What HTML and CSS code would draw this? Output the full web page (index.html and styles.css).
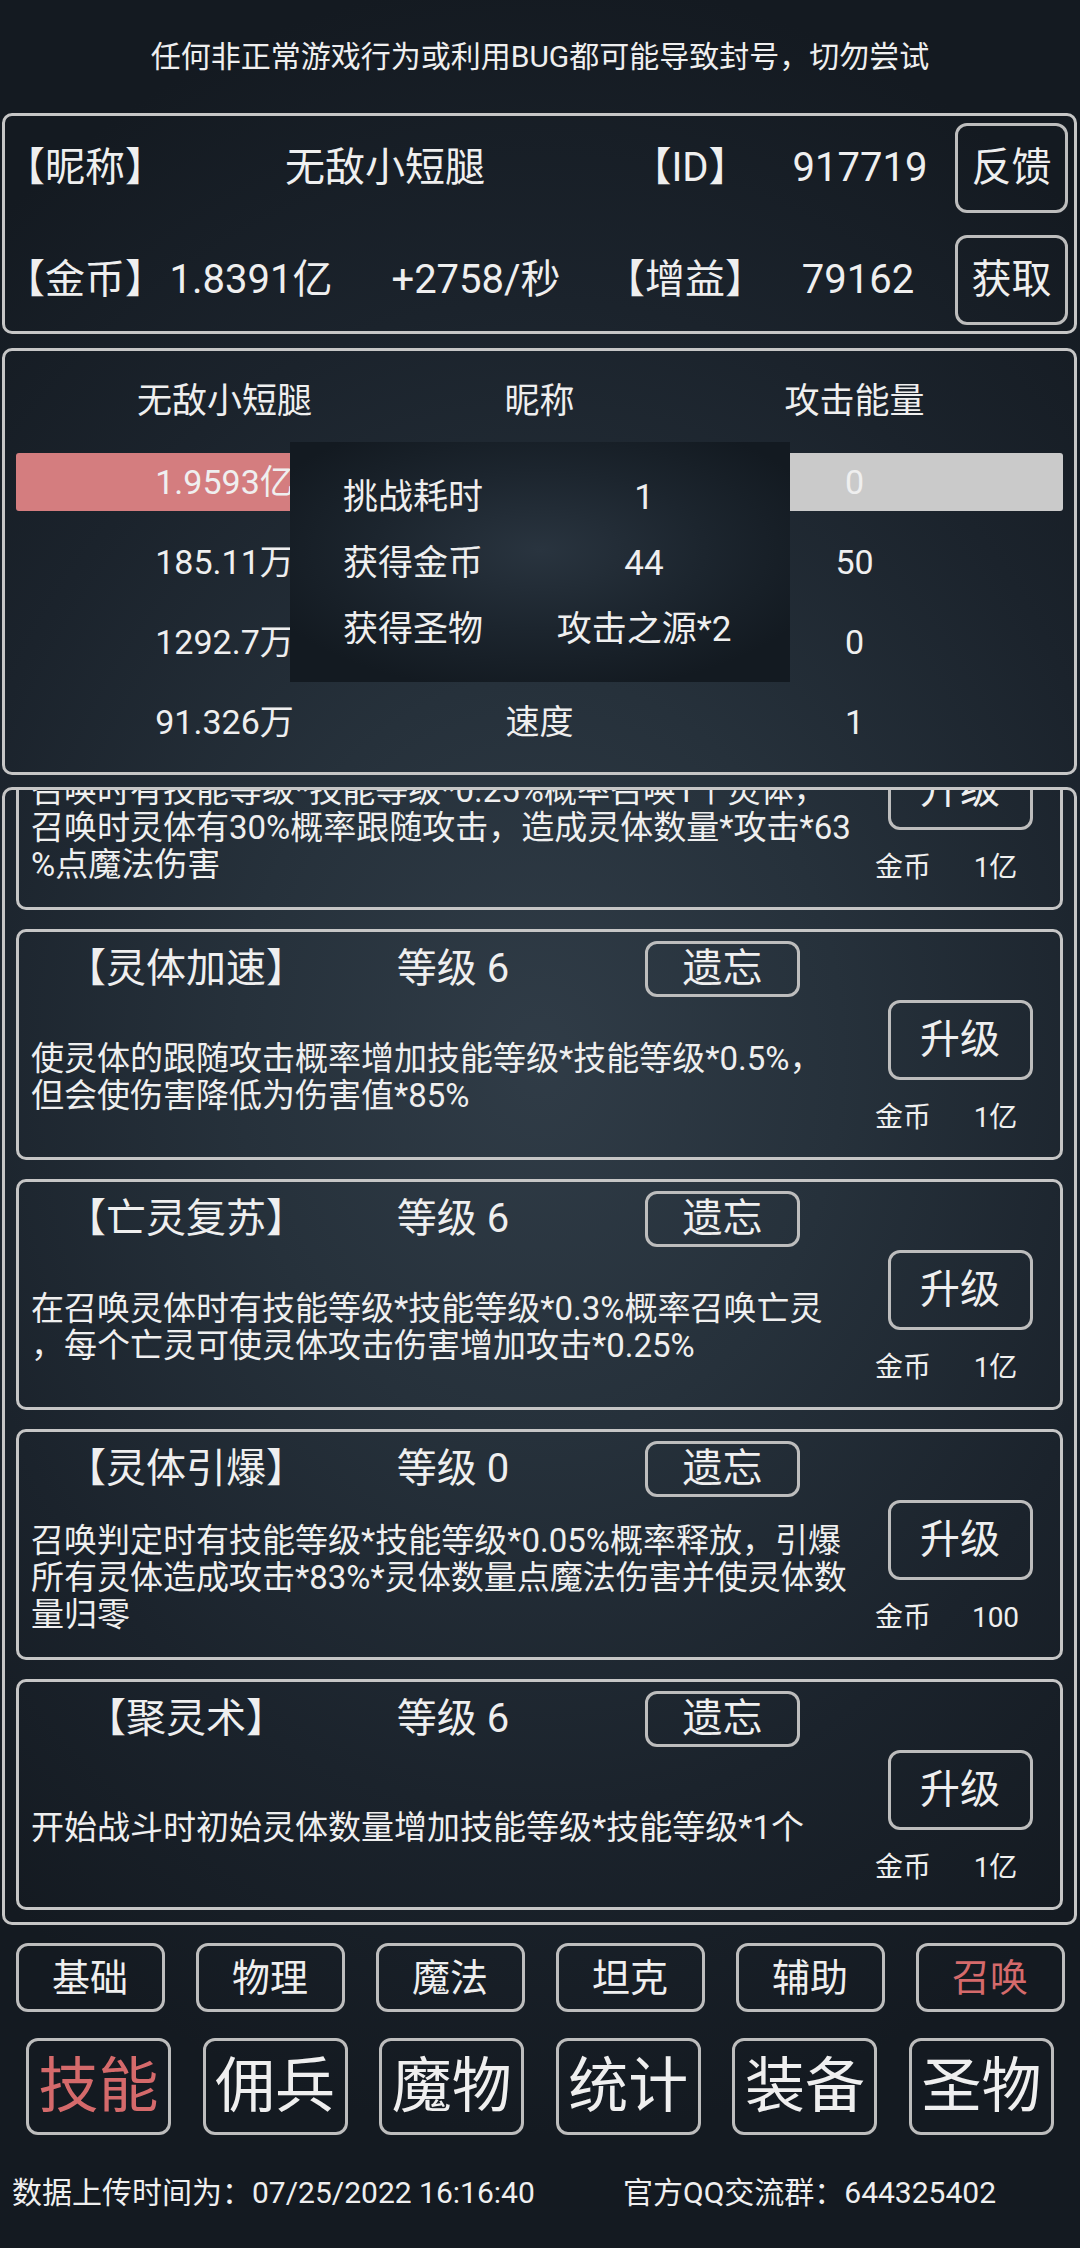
FILE: index.html
```html
<!DOCTYPE html>
<html lang="zh-CN">
<head>
    <meta charset="UTF-8">
    <meta name="viewport" content="width=device-width, initial-scale=1.0">
    <title>技能 - 召唤</title>
    <link rel="stylesheet" href="styles.css">
</head>
<body>
    <div class="notice">任何非正常游戏行为或利用BUG都可能导致封号，切勿尝试</div>

    <div class="info-card">
        <div class="info-row row-top">
            <span>【昵称】</span>
            <span>无敌小短腿</span>
            <span>【ID】</span>
            <span>917719</span>
            <button class="btn info-btn">反馈</button>
        </div>
        <div class="info-row row-bottom">
            <span>【金币】</span>
            <span>1.8391亿</span>
            <span>+2758/秒</span>
            <span>【增益】</span>
            <span>79162</span>
            <button class="btn info-btn">获取</button>
        </div>
    </div>

    <div class="rank-panel">
        <div class="rank-row head">
            <span>无敌小短腿</span><span>昵称</span><span>攻击能量</span>
        </div>
        <div class="rank-row hp">
            <span>1.9593亿</span><span>生命</span><span>0</span>
        </div>
        <div class="rank-row">
            <span>185.11万</span><span>攻击</span><span>50</span>
        </div>
        <div class="rank-row">
            <span>1292.7万</span><span>防御</span><span>0</span>
        </div>
        <div class="rank-row">
            <span>91.326万</span><span>速度</span><span>1</span>
        </div>

        <!-- 挑战结果弹窗 -->
        <div class="result">
            <span>挑战耗时</span><span>1</span>
            <span>获得金币</span><span>44</span>
            <span>获得圣物</span><span>攻击之源*2</span>
        </div>
    </div>

    <div class="skill-panel">
        <div class="skill-list">
            <div class="skill-card">
                <div class="skill-main">
                    <div class="skill-title">
                        <span class="skill-name">【召唤灵体】</span>
                        <span class="skill-level">等级 6</span>
                        <button class="btn forget-btn">遗忘</button>
                    </div>
                    <div class="skill-desc">召唤时有技能等级*技能等级*0.25%概率召唤1个灵体，<br>召唤时灵体有30%概率跟随攻击，造成灵体数量*攻击*63<br>%点魔法伤害</div>
                </div>
                <div class="skill-side">
                    <button class="btn up-btn">升级</button>
                    <div class="cost"><span>金币</span><span class="cost-num">1亿</span></div>
                </div>
            </div>

            <div class="skill-card">
                <div class="skill-main">
                    <div class="skill-title">
                        <span class="skill-name">【灵体加速】</span>
                        <span class="skill-level">等级 6</span>
                        <button class="btn forget-btn">遗忘</button>
                    </div>
                    <div class="skill-desc">使灵体的跟随攻击概率增加技能等级*技能等级*0.5%，<br>但会使伤害降低为伤害值*85%</div>
                </div>
                <div class="skill-side">
                    <button class="btn up-btn">升级</button>
                    <div class="cost"><span>金币</span><span class="cost-num">1亿</span></div>
                </div>
            </div>

            <div class="skill-card">
                <div class="skill-main">
                    <div class="skill-title">
                        <span class="skill-name">【亡灵复苏】</span>
                        <span class="skill-level">等级 6</span>
                        <button class="btn forget-btn">遗忘</button>
                    </div>
                    <div class="skill-desc">在召唤灵体时有技能等级*技能等级*0.3%概率召唤亡灵<br>，每个亡灵可使灵体攻击伤害增加攻击*0.25%</div>
                </div>
                <div class="skill-side">
                    <button class="btn up-btn">升级</button>
                    <div class="cost"><span>金币</span><span class="cost-num">1亿</span></div>
                </div>
            </div>

            <div class="skill-card">
                <div class="skill-main">
                    <div class="skill-title">
                        <span class="skill-name">【灵体引爆】</span>
                        <span class="skill-level">等级 0</span>
                        <button class="btn forget-btn">遗忘</button>
                    </div>
                    <div class="skill-desc">召唤判定时有技能等级*技能等级*0.05%概率释放，引爆<br>所有灵体造成攻击*83%*灵体数量点魔法伤害并使灵体数<br>量归零</div>
                </div>
                <div class="skill-side">
                    <button class="btn up-btn">升级</button>
                    <div class="cost"><span>金币</span><span class="cost-num">100</span></div>
                </div>
            </div>

            <div class="skill-card">
                <div class="skill-main">
                    <div class="skill-title">
                        <span class="skill-name">【聚灵术】</span>
                        <span class="skill-level">等级 6</span>
                        <button class="btn forget-btn">遗忘</button>
                    </div>
                    <div class="skill-desc">开始战斗时初始灵体数量增加技能等级*技能等级*1个</div>
                </div>
                <div class="skill-side">
                    <button class="btn up-btn">升级</button>
                    <div class="cost"><span>金币</span><span class="cost-num">1亿</span></div>
                </div>
            </div>
        </div>
    </div>

    <div class="category-bar">
        <button class="btn cat-btn">基础</button>
        <button class="btn cat-btn">物理</button>
        <button class="btn cat-btn">魔法</button>
        <button class="btn cat-btn">坦克</button>
        <button class="btn cat-btn">辅助</button>
        <button class="btn cat-btn active">召唤</button>
    </div>

    <div class="tab-bar">
        <button class="btn tab-btn active">技能</button>
        <button class="btn tab-btn">佣兵</button>
        <button class="btn tab-btn">魔物</button>
        <button class="btn tab-btn">统计</button>
        <button class="btn tab-btn">装备</button>
        <button class="btn tab-btn">圣物</button>
    </div>

    <div class="footer">
        <span>数据上传时间为：07/25/2022 16:16:40</span>
        <span>官方QQ交流群：644325402</span>
    </div>
</body>
</html>
```

FILE: styles.css
```css
* {
    box-sizing: border-box;
}

html {
    background-color: #151c23;
}

body {
    margin: 0;
    width: 1080px;
    height: 2248px;
    overflow: hidden;
    font-family: Roboto, "Noto Sans CJK SC", sans-serif;
    color: #efefef;
    line-height: 1.2;
    background: radial-gradient(ellipse 80% 48% at 50% 47%, #303c47 0%, #26313b 35%, #1b232c 70%, #141a21 100%);
}

.btn {
    background: transparent;
    border: 3px solid #bdbdbd;
    border-radius: 12px;
    color: #efefef;
    font-family: inherit;
    padding: 0;
    display: flex;
    align-items: center;
    justify-content: center;
    line-height: 1;
}

.notice {
    height: 113px;
    display: flex;
    align-items: center;
    justify-content: center;
    font-size: 30px;
}

/* 玩家信息 */
.info-card {
    margin: 0 3px 0 2px;
    height: 221px;
    border: 3px solid #c6c6c6;
    border-radius: 10px;
    padding-top: 7px;
}

.info-row {
    display: grid;
    height: 90px;
    align-items: center;
    justify-items: center;
    font-size: 40px;
}

.row-top {
    grid-template-columns: 150px 460px 150px 190px 113px;
}

.row-bottom {
    grid-template-columns: 150px 192px 258px 156px 194px 113px;
    margin-top: 22px;
}

.info-btn {
    width: 113px;
    height: 90px;
    font-size: 40px;
}

/* 排行 */
.rank-panel {
    position: relative;
    margin: 14px 3px 0 2px;
    height: 427px;
    border: 3px solid #c6c6c6;
    border-radius: 10px;
    padding: 11px 11px 0;
}

.rank-row {
    display: grid;
    grid-template-columns: repeat(3, 315px);
    justify-content: center;
    justify-items: center;
    align-items: center;
    height: 80px;
    font-size: 34px;
}

.rank-row.head {
    font-size: 35px;
}

.rank-row.hp {
    height: 58px;
    margin: 11px 0;
    border-radius: 3px;
    background: linear-gradient(to right, #d47d7f 0, #d47d7f 50%, #cacaca 50%, #cacaca 100%);
}

.result {
    position: absolute;
    left: 285px;
    top: 91px;
    width: 500px;
    height: 240px;
    padding-top: 23px;
    display: grid;
    grid-template-columns: 246px 216px;
    grid-auto-rows: 66px;
    justify-items: center;
    align-items: center;
    font-size: 35px;
    background: radial-gradient(ellipse 60% 60% at 50% 45%, #29343f 0%, #1c252e 55%, #131a21 100%);
}

/* 技能列表 */
.skill-panel {
    margin: 12px 3px 0 2px;
    height: 1138px;
    border: 3px solid #c6c6c6;
    border-radius: 10px;
    padding: 0 11px;
    overflow: hidden;
}

.skill-list {
    margin-top: -111px;
    display: flex;
    flex-direction: column;
    gap: 19px;
}

.skill-card {
    height: 231px;
    border: 3px solid #c6c6c6;
    border-radius: 10px;
    display: grid;
    grid-template-columns: 841px 1fr;
}

.skill-main {
    display: flex;
    flex-direction: column;
}

.skill-title {
    display: flex;
    align-items: center;
    margin-top: 9px;
    height: 56px;
    font-size: 40px;
}

.skill-name {
    width: 334px;
    text-align: center;
}

.skill-level {
    width: 200px;
    text-align: center;
}

.forget-btn {
    margin-left: 92px;
    width: 155px;
    height: 56px;
    font-size: 40px;
}

.skill-desc {
    flex: 1;
    display: flex;
    align-items: center;
    padding-left: 12px;
    font-size: 33px;
    line-height: 37px;
    white-space: nowrap;
}

.skill-side {
    padding-top: 68px;
}

.up-btn {
    width: 145px;
    height: 80px;
    margin: 0 auto;
    font-size: 40px;
}

.cost {
    display: flex;
    margin-top: 20px;
    height: 36px;
    align-items: center;
    padding-left: 15px;
    font-size: 28px;
}

.cost-num {
    flex: 1;
    text-align: center;
}

/* 底部导航 */
.category-bar,
.tab-bar {
    display: flex;
    justify-content: center;
    gap: 31px;
}

.category-bar {
    margin-top: 18px;
}

.cat-btn {
    width: 149px;
    height: 69px;
    font-size: 38px;
}

.tab-bar {
    margin-top: 26px;
    gap: 31.6px;
}

.tab-btn {
    width: 145px;
    height: 97px;
    font-size: 60px;
}

.btn.active {
    color: #d56a6b;
}

.footer {
    display: grid;
    grid-template-columns: 611px auto;
    margin-top: 38px;
    padding-left: 12px;
    height: 40px;
    align-items: center;
    font-size: 30px;
}
```
